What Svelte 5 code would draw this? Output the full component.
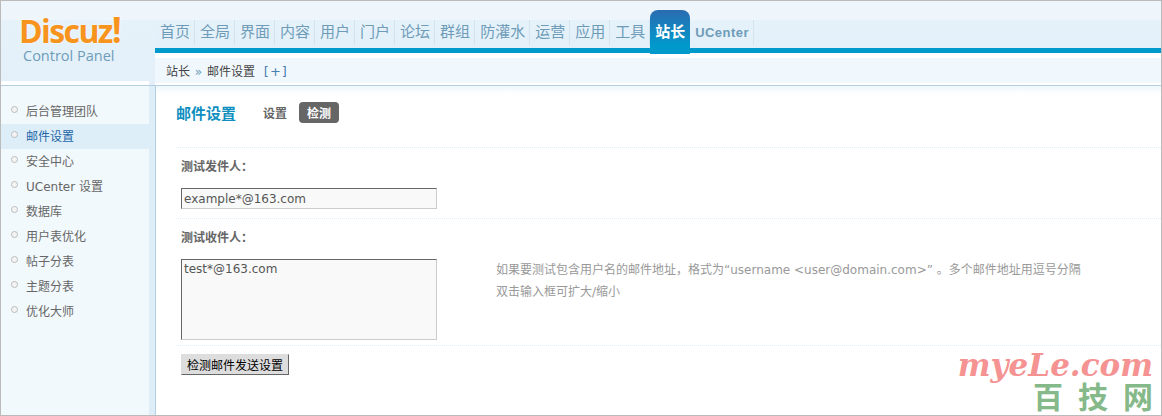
<script>
    const navs = ['首页', '全局', '界面', '内容', '用户', '门户', '论坛', '群组', '防灌水', '运营', '应用', '工具'];
    const menu = ['后台管理团队', '邮件设置', '安全中心', 'UCenter 设置', '数据库', '用户表优化', '帖子分表', '主题分表', '优化大师'];
</script>

<div class="page">
    <header class="top">
        <div class="logo">
            <div class="brand">Discuz<span>!</span></div>
            <div class="sub">Control Panel</div>
        </div>
        <div class="topright">
            <nav class="nav">
                {#each navs as n}
                    <a class="item" href="#/">{n}</a>
                {/each}
                <a class="item on" href="#/">站长</a>
                <a class="item uc" href="#/">UCenter</a>
            </nav>
            <div class="bluebar"></div>
            <div class="crumb">站长 <em>»</em> 邮件设置 <b>[+]</b></div>
        </div>
    </header>

    <div class="body">
        <aside class="side">
            <ul>
                {#each menu as m, i}
                    <li class:cur={i === 1}><i></i>{m}</li>
                {/each}
            </ul>
        </aside>
        <main class="main">
            <div class="title">
                <h3>邮件设置</h3>
                <span class="tab">设置</span>
                <span class="tab act">检测</span>
            </div>
            <section class="row first">
                <label for="from">测试发件人&#65306;</label>
                <input id="from" value="example*@163.com" />
            </section>
            <section class="row second">
                <label for="to">测试收件人&#65306;</label>
                <div class="pair">
                    <textarea id="to">test*@163.com</textarea>
                    <p>如果要测试包含用户名的邮件地址&#65292;格式为“username &lt;user@domain.com&gt;” 。多个邮件地址用逗号分隔<br />双击输入框可扩大/缩小</p>
                </div>
            </section>
            <section class="row last">
                <button>检测邮件发送设置</button>
            </section>
            <div class="mark">
                <div class="en">myeLe.com</div>
                <div class="cn"><span>百</span><span>技</span><span>网</span></div>
            </div>
        </main>
    </div>
</div>

<style>
    :global(body) {
        margin: 0;
        background: #fff;
    }

    .page {
        width: 1162px;
        height: 416px;
        box-sizing: border-box;
        border: 1px solid #bbb;
        overflow: hidden;
        font: 12px "DejaVu Sans", "Noto Sans CJK SC", sans-serif;
        color: #666;
    }

    .top {
        display: flex;
        height: 84px;
        background: linear-gradient(#eef6fc 0 19px, #e6f2fa 19px, #e3f0f9);
    }

    .logo {
        width: 148px;
        height: 84px;
        padding-top: 15px;
        box-sizing: border-box;
        border-bottom: 4px solid #fff;
        margin-right: 6px;
        padding-left: 18px;
    }

    .brand {
        font: bold 32px/28px "Open Sans", "Liberation Sans", sans-serif;
        letter-spacing: -1.6px;
        color: #f7941d;
        text-shadow: 0 0 2px #fff;
    }

    .brand span {
        font-size: 35px;
    }

    .sub {
        font: 14.5px/18px "Open Sans", "Liberation Sans", sans-serif;
        color: #6e9cb8;
        margin: 2px 0 0 4px;
    }

    .topright {
        flex: 1;
        min-width: 0;
        background: #fff;
    }

    .nav {
        display: flex;
        height: 47px;
        box-sizing: border-box;
        background: linear-gradient(#eef6fc 0 19px, #e6f2fa 19px, #e3f0f9);
    }

    .item {
        height: 25px;
        margin-top: 19px;
        padding: 0 4px 0 5px;
        font-size: 15px;
        line-height: 25px;
        color: #6e9cb8;
        text-decoration: none;
        border-right: 1px solid #d3e4ef;
    }

    .item.on {
        position: relative;
        z-index: 1;
        width: 30px;
        height: 34px;
        margin-top: 9px;
        padding: 10px 5px 0;
        font-weight: bold;
        color: #fff;
        border: 0;
        border-radius: 8px 8px 0 0;
        background: linear-gradient(#2b6cb0, #0099cc 80%);
    }

    .item.uc {
        font: bold 13px/25px "Liberation Sans", sans-serif;
        letter-spacing: 0.45px;
    }

    .bluebar {
        height: 5px;
        background: #0099cc;
    }

    .crumb {
        margin-top: 5px;
        height: 25px;
        padding-left: 11px;
        line-height: 27px;
        background: #f0f8fd;
        color: #444;
    }

    .crumb em {
        font-style: normal;
        color: #6e9cb8;
        margin: 0 1px;
    }

    .crumb b {
        font-weight: normal;
        color: #4a7fb0;
        margin-left: 5px;
        font-size: 13px;
        letter-spacing: 1px;
    }

    .body {
        display: flex;
        height: 330px;
        border-top: 1px solid #b5cfe0;
    }

    .side {
        width: 148px;
        background: #f2f9fd;
        border-right: 6px solid #deeef8;
        box-shadow: 1px 0 0 #b5cfe0;
        padding-top: 13px;
    }

    ul {
        margin: 0;
        padding: 0;
        list-style: none;
    }

    li {
        height: 25px;
        box-sizing: border-box;
        padding: 0 0 2px 10px;
        display: flex;
        align-items: center;
        color: #666;
    }

    li i {
        width: 5px;
        height: 5px;
        border: 1px solid #bbb;
        border-radius: 50%;
        background: #f4f4f4;
        margin-right: 8px;
        position: relative;
        top: -1px;
    }

    li.cur {
        background: #deeef8;
        color: #2366a8;
    }

    .main {
        flex: 1;
        min-width: 0;
        position: relative;
        margin-left: 1px;
        padding: 0 0 0 20px;
        background: linear-gradient(#eef6fb, #fff 8px);
    }

    .title {
        display: flex;
        align-items: center;
        height: 53px;
        box-sizing: border-box;
    }

    h3 {
        margin: 0 27px 0 0;
        font-size: 15px;
        color: #0f8fc0;
        font-weight: bold;
    }

    .tab {
        font-weight: bold;
        color: #666;
        margin-right: 12px;
    }

    .tab.act {
        background: #666;
        color: #fff;
        border-radius: 4px;
        padding: 2px 8px;
    }

    .row {
        border-top: 1px dotted #e0eef6;
        padding-left: 5px;
    }

    .first {
        margin-top: 8px;
        height: 70px;
    }

    .second {
        height: 126px;
    }

    label {
        display: block;
        font-weight: bold;
        color: #666;
        line-height: 16px;
        padding-top: 11px;
    }

    input {
        display: block;
        width: 256px;
        height: 21px;
        box-sizing: border-box;
        margin-top: 13px;
        padding: 0 2px;
        border: 1px solid;
        border-color: #666 #ccc #ccc #666;
        background: #f9f9f9;
        color: #555;
        font: 12px "DejaVu Sans", sans-serif;
        outline: 0;
    }

    .pair {
        display: flex;
        margin-top: 13px;
    }

    textarea {
        width: 256px;
        height: 81px;
        box-sizing: border-box;
        margin: 0;
        padding: 2px;
        border: 1px solid;
        border-color: #666 #ccc #ccc #666;
        background: #f9f9f9;
        color: #555;
        font: 12px "DejaVu Sans", sans-serif;
        resize: none;
    }

    .pair p {
        margin: 0 0 0 59px;
        color: #999;
        line-height: 22px;
    }

    .last {
        padding-top: 8px;
    }

    button {
        display: block;
        width: 108px;
        height: 21px;
        padding: 0;
        border: 1px solid;
        border-color: #ddd #666 #666 #ddd;
        background: #ddd;
        color: #000;
        font: 12px "Liberation Sans", "Noto Sans CJK SC", sans-serif;
    }

    .mark {
        position: absolute;
        right: 8px;
        bottom: 6px;
        text-align: right;
    }

    .en {
        font: italic bold 31px/30px "DejaVu Serif", serif;
        color: #f59393;
    }

    .cn {
        display: flex;
        justify-content: flex-end;
        gap: 15px;
        font: bold 30px/30px "Noto Sans CJK SC", sans-serif;
        color: #86b98a;
    }
</style>
